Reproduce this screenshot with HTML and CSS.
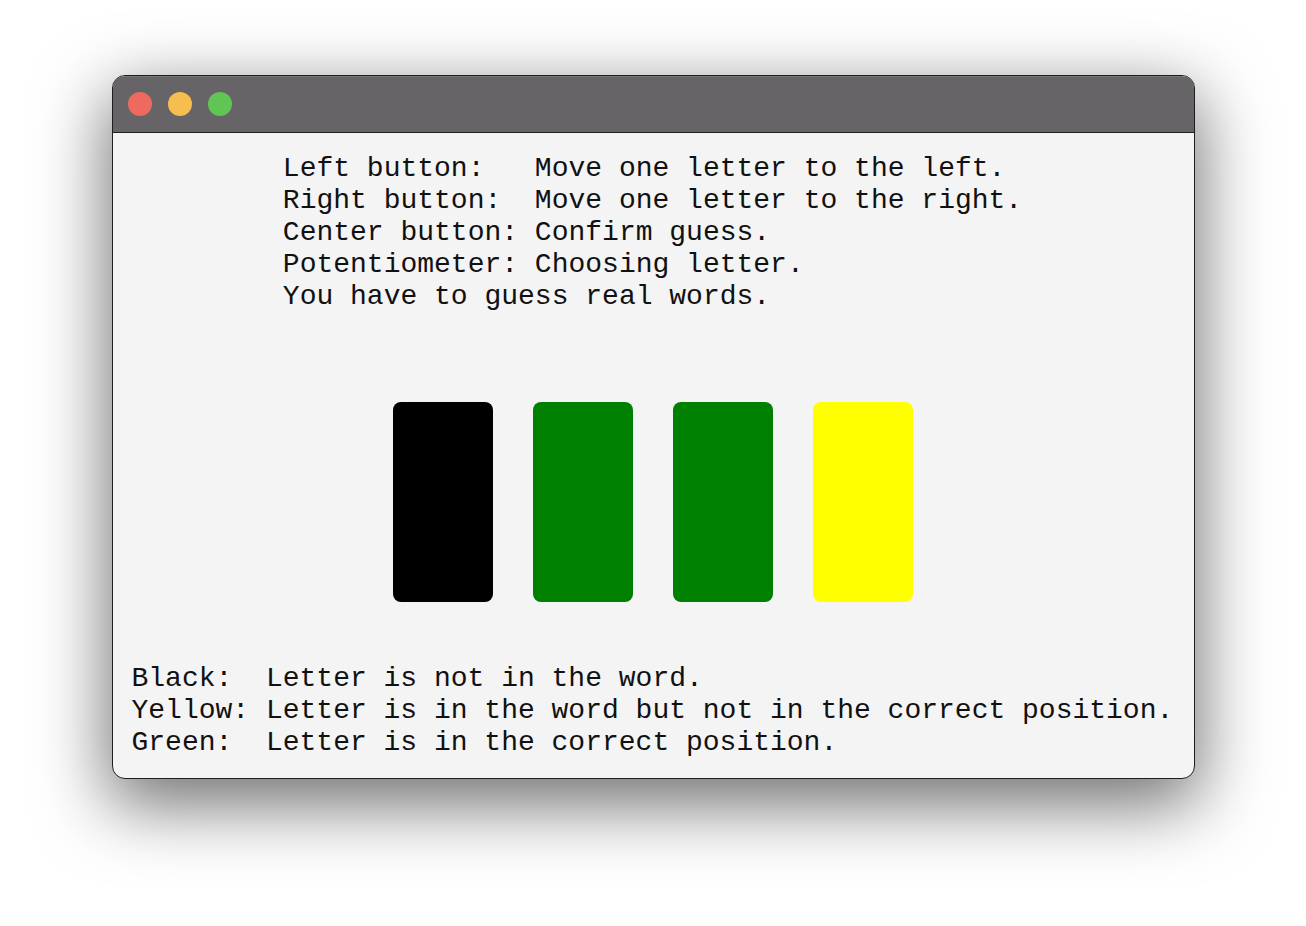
FILE: index.html
```html
<!DOCTYPE html>
<html>
<head>
<meta charset="utf-8">
<link rel="stylesheet" href="styles.css">
</head>
<body>
<div class="window">
  <div class="titlebar">
    <span class="light red"></span>
    <span class="light yellow"></span>
    <span class="light green"></span>
  </div>
  <div class="content">
    <div class="instructions">Left button:   Move one letter to the left.
Right button:  Move one letter to the right.
Center button: Confirm guess.
Potentiometer: Choosing letter.
You have to guess real words.</div>
    <div class="tiles">
      <div class="tile black"></div>
      <div class="tile green"></div>
      <div class="tile green"></div>
      <div class="tile yellow"></div>
    </div>
    <div class="legend">Black:  Letter is not in the word.
Yellow: Letter is in the word but not in the correct position.
Green:  Letter is in the correct position.</div>
  </div>
</div>
</body>
</html>
```
FILE: styles.css
```css
html, body {
  margin: 0;
  padding: 0;
  background: #ffffff;
}
body {
  padding-top: 75px;
  height: 926px;
  box-sizing: border-box;
}
.window {
  width: 1083px;
  height: 704px;
  margin: 0 auto;
  box-sizing: border-box;
  border: 1px solid #1e1e1e;
  border-radius: 13px;
  overflow: hidden;
  background: #f4f4f4;
  box-shadow: 0 22px 70px 4px rgba(0, 0, 0, 0.56);
  display: flex;
  flex-direction: column;
}
.titlebar {
  height: 56px;
  flex: none;
  background: #676467;
  border-bottom: 1px solid #1e1e1e;
  box-shadow: inset 0 1px 0 rgba(255,255,255,0.12);
  display: flex;
  align-items: center;
  gap: 16px;
  padding-left: 15px;
  box-sizing: content-box;
}
.light {
  width: 24px;
  height: 24px;
  border-radius: 50%;
  display: block;
}
.light.red { background: #ee6a5f; }
.light.yellow { background: #f5be4f; }
.light.green { background: #61c554; }
.content {
  flex: 1;
  display: flex;
  flex-direction: column;
  padding: 20px 20px 0 19px;
  font-family: "Liberation Mono", "Courier New", monospace;
  font-size: 28px;
  line-height: 32px;
  color: #111;
}
.instructions {
  white-space: pre;
  align-self: center;
}
.tiles {
  display: flex;
  justify-content: center;
  gap: 40px;
  margin-top: 89px;
}
.tile {
  width: 100px;
  height: 200px;
  border-radius: 8px;
}
.tile.black { background: #000000; }
.tile.green { background: #008000; }
.tile.yellow { background: #ffff00; }
.legend {
  white-space: pre;
  margin-top: 61px;
}
```
